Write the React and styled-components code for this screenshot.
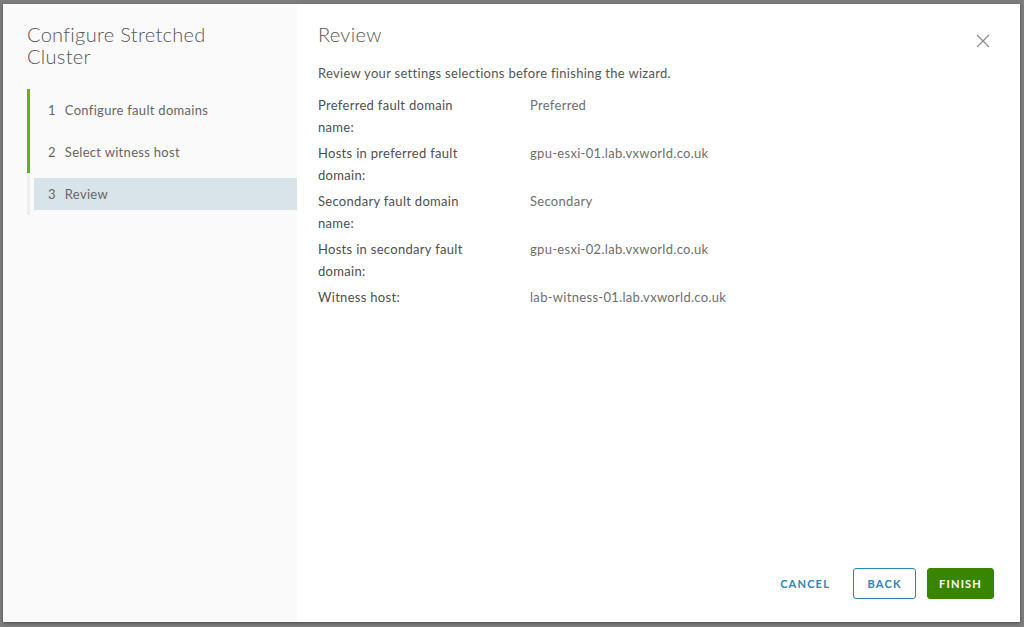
import React from "react";
import styled, { createGlobalStyle } from "styled-components";

const GlobalStyle = createGlobalStyle`
  html, body {
    margin: 0;
    padding: 0;
    background: #7f7f7f;
    font-family: Lato, "Noto Sans", sans-serif;
  }
  * { box-sizing: border-box; }
`;

const Backdrop = styled.div`
  width: 1024px;
  height: 627px;
  padding: 4px 4px 5px 3px;
  background: #7d7d7d;
  overflow: hidden;
`;

const Modal = styled.div`
  display: grid;
  grid-template-columns: 294px 1fr;
  height: 618px;
  background: #fff;
  box-shadow: 0 1px 3px rgba(0, 0, 0, 0.4);
`;

const Sidebar = styled.nav`
  background: #fafafa;
  padding: 19px 0 0 24px;
`;

const SideTitle = styled.h2`
  margin: 0 0 22px;
  font-size: 20px;
  line-height: 22px;
  font-weight: 300;
  color: #565656;
  letter-spacing: 0.3px;
`;

const StepList = styled.ol`
  list-style: none;
  margin: 0;
  padding: 0;
`;

const Step = styled.li`
  height: 42px;
  border-left: 3px solid ${(p) => (p.done ? "#60b515" : "#eeeeee")};
  padding: 5px 0 5px 4px;
`;

const StepButton = styled.div`
  display: flex;
  align-items: center;
  gap: 9px;
  height: 32px;
  padding-left: 14px;
  font-size: 13px;
  letter-spacing: 0.3px;
  color: #666;
  background: ${(p) => (p.current ? "#d9e4ea" : "transparent")};
`;

const Content = styled.main`
  position: relative;
  display: flex;
  flex-direction: column;
  padding: 18px 26px 23px 21px;
`;

const Title = styled.h1`
  margin: 0;
  font-size: 20px;
  line-height: 24px;
  font-weight: 300;
  letter-spacing: 0.3px;
  color: #565656;
`;

const Close = styled.button`
  position: absolute;
  top: 29px;
  right: 29px;
  width: 16px;
  height: 16px;
  padding: 0;
  border: none;
  background: none;
  color: #8c8c8c;
  cursor: pointer;
`;

const Intro = styled.p`
  margin: 18px 0 12px;
  font-size: 13px;
  line-height: 18px;
  letter-spacing: 0.3px;
  color: #565656;
`;

const Summary = styled.dl`
  display: grid;
  grid-template-columns: 160px 1fr;
  column-gap: 52px;
  row-gap: 4px;
  margin: 0;
  font-size: 13px;
  line-height: 22px;
  letter-spacing: 0.3px;
`;

const Label = styled.dt`
  color: #4f4f4f;
`;

const Value = styled.dd`
  margin: 0;
  color: #6e6e6e;
`;

const Footer = styled.footer`
  margin-top: auto;
  display: flex;
  justify-content: flex-end;
  gap: 11px;
`;

const Button = styled.button`
  height: 31px;
  padding: 0 11px;
  min-width: ${(p) => (p.variant === "flat" ? "0" : "63px")};
  border-radius: 3px;
  font-family: inherit;
  font-size: 11px;
  font-weight: 700;
  letter-spacing: 1.2px;
  text-transform: uppercase;
  cursor: pointer;
  border: 1px solid
    ${(p) =>
      p.variant === "primary" ? "#388600" : p.variant === "outline" ? "#2a85b8" : "transparent"};
  background: ${(p) => (p.variant === "primary" ? "#388600" : "transparent")};
  color: ${(p) => (p.variant === "primary" ? "#fff" : "#2a85b8")};
`;

const steps = [
  { n: 1, label: "Configure fault domains", done: true },
  { n: 2, label: "Select witness host", done: true },
  { n: 3, label: "Review", current: true },
];

const rows = [
  ["Preferred fault domain name:", "Preferred"],
  ["Hosts in preferred fault domain:", "gpu-esxi-01.lab.vxworld.co.uk"],
  ["Secondary fault domain name:", "Secondary"],
  ["Hosts in secondary fault domain:", "gpu-esxi-02.lab.vxworld.co.uk"],
  ["Witness host:", "lab-witness-01.lab.vxworld.co.uk"],
];

export default function App() {
  return (
    <Backdrop>
      <GlobalStyle />
      <Modal>
        <Sidebar>
          <SideTitle>
            Configure Stretched
            <br />
            Cluster
          </SideTitle>
          <StepList>
            {steps.map((s) => (
              <Step key={s.n} done={s.done}>
                <StepButton current={s.current}>
                  <span>{s.n}</span>
                  <span>{s.label}</span>
                </StepButton>
              </Step>
            ))}
          </StepList>
        </Sidebar>
        <Content>
          <Title>Review</Title>
          <Close aria-label="Close">
            <svg width="16" height="16" viewBox="0 0 16 16">
              <path d="M2 2 L14 14 M14 2 L2 14" stroke="currentColor" strokeWidth="1.2" />
            </svg>
          </Close>
          <Intro>Review your settings selections before finishing the wizard.</Intro>
          <Summary>
            {rows.map(([k, v]) => (
              <React.Fragment key={k}>
                <Label>{k}</Label>
                <Value>{v}</Value>
              </React.Fragment>
            ))}
          </Summary>
          <Footer>
            <Button variant="flat">Cancel</Button>
            <Button variant="outline">Back</Button>
            <Button variant="primary">Finish</Button>
          </Footer>
        </Content>
      </Modal>
    </Backdrop>
  );
}
